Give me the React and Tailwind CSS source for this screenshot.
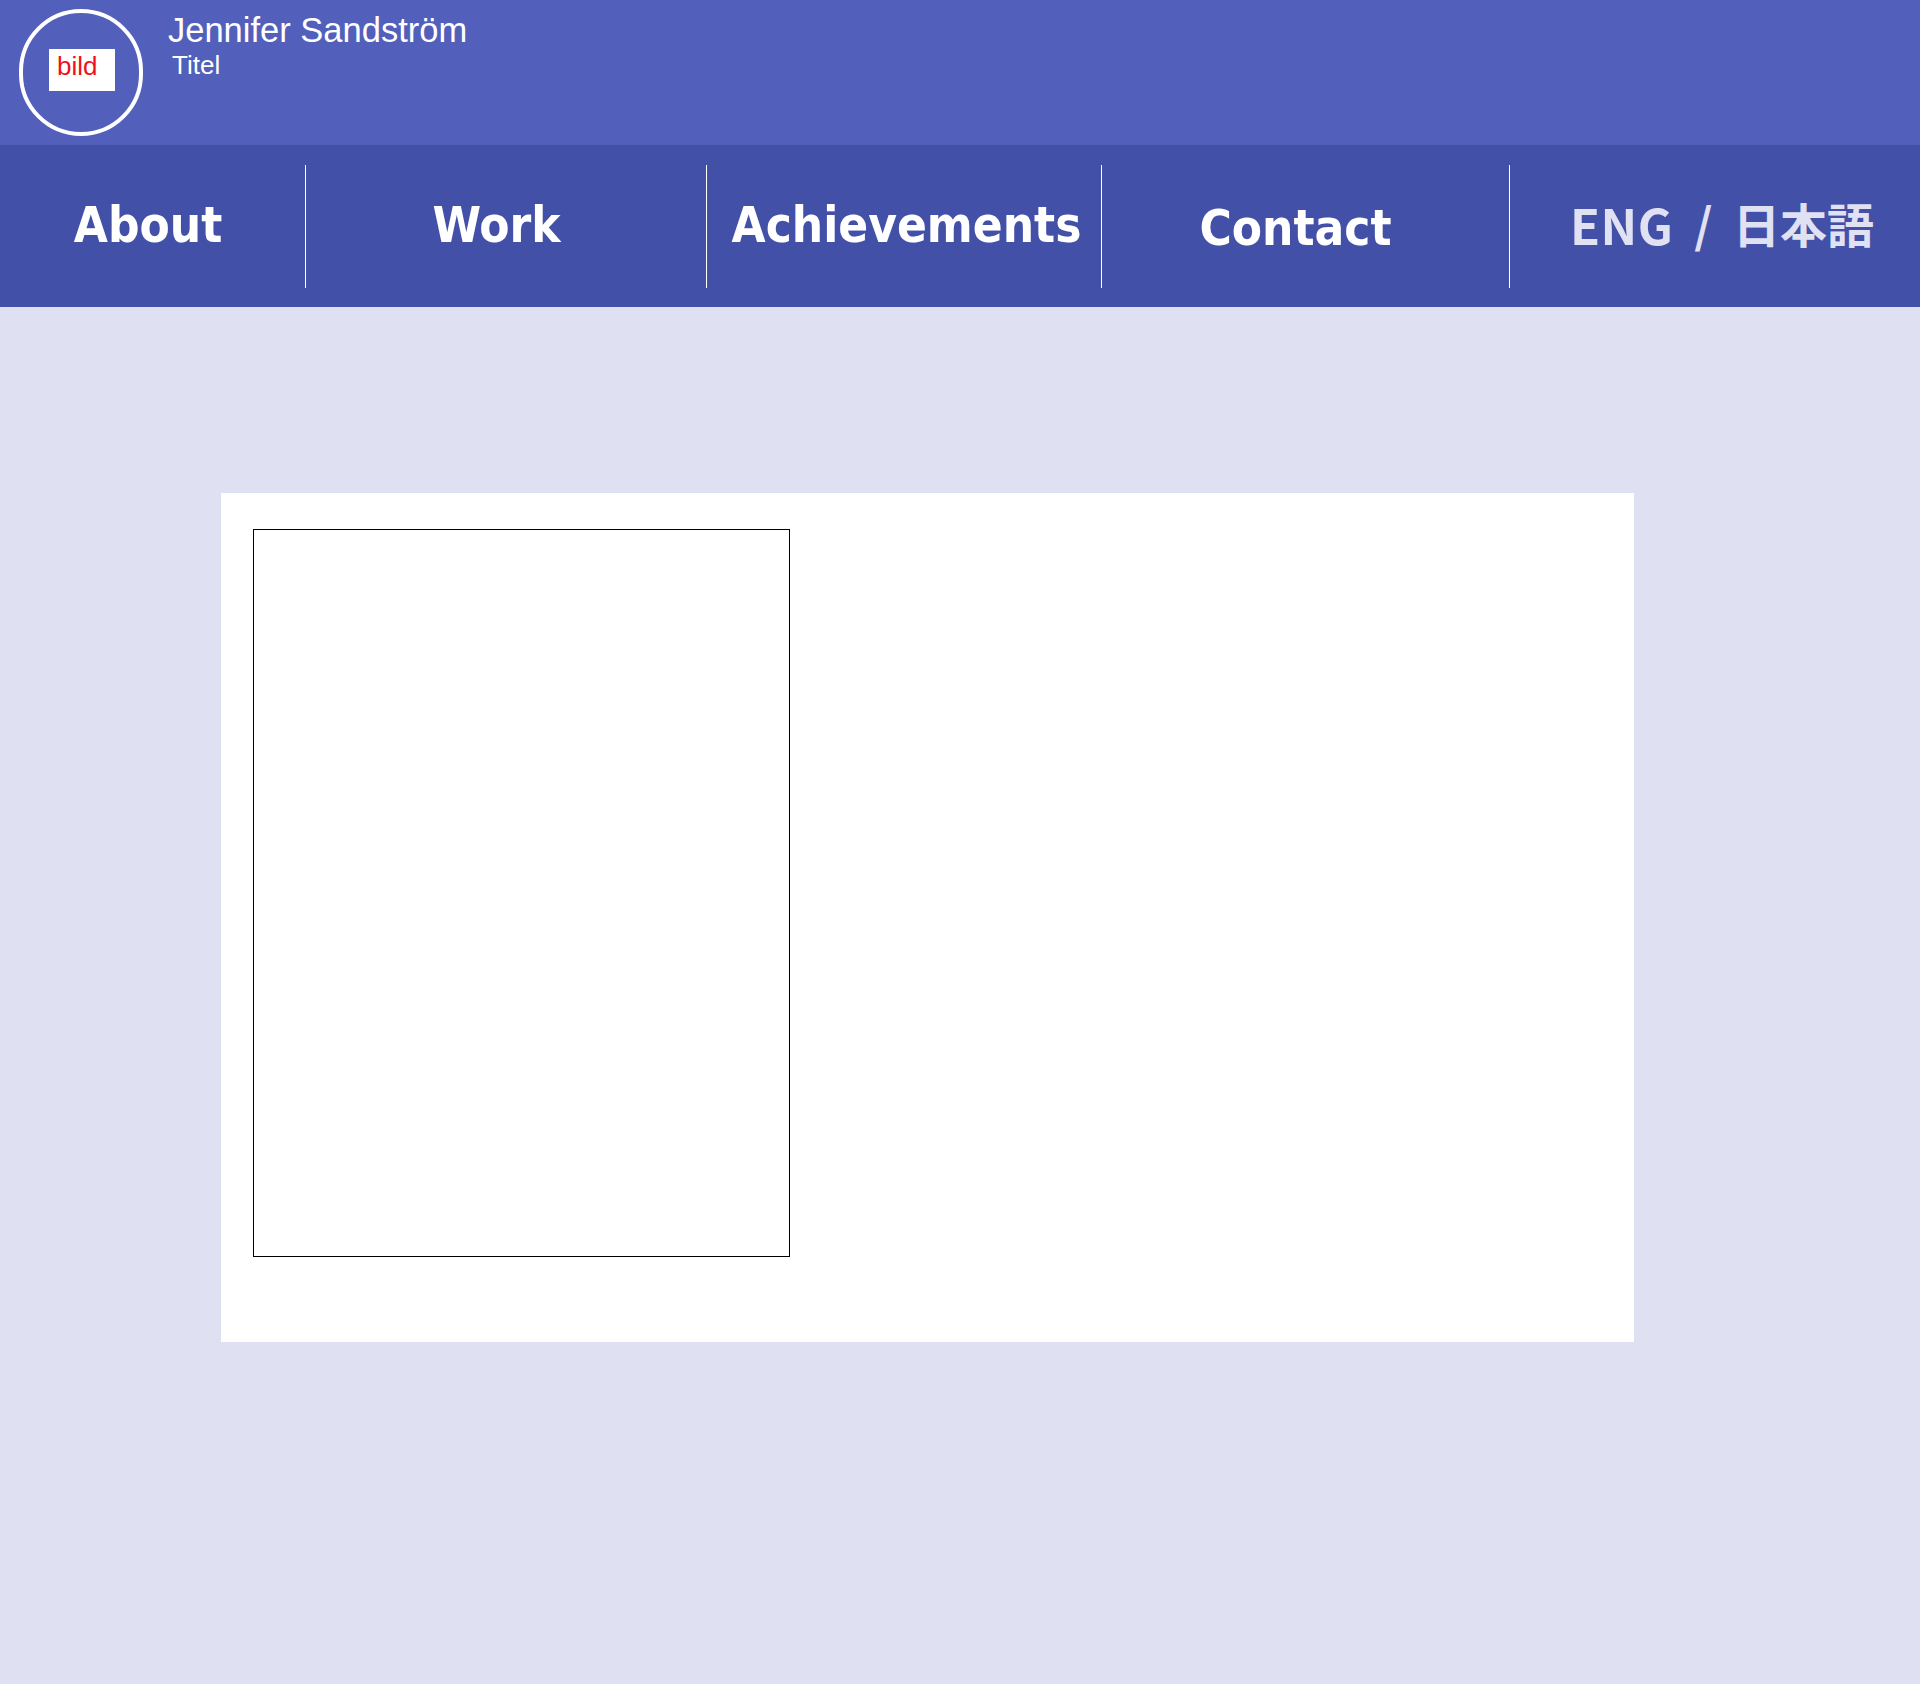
import React from "react";

const navFont = { fontFamily: '"DejaVu Sans Condensed", "DejaVu Sans", sans-serif' };

export default function App() {
  return (
    <div className="min-h-[1684px] w-full bg-[#dfe0f2]">
      <header className="h-[145px] bg-[#5260bb] flex items-start">
        <div className="ml-[19px] mt-[9px] w-[124px] h-[127px] rounded-full border-4 border-white flex items-center justify-center">
          <div className="w-[66px] h-[42px] bg-white ml-[2px] mb-[6px] pl-[8px] text-[26px] leading-[34px] text-[#f01020] font-['Liberation_Sans',Arial,sans-serif]">
            bild
          </div>
        </div>
        <div className="ml-[25px] flex flex-col font-['Liberation_Sans',Arial,sans-serif] text-white">
          <div className="mt-[10px] text-[34.5px] leading-[40px]">Jennifer Sandström</div>
          <div className="ml-[4px] mt-[-3px] text-[26px] leading-[36px]">Titel</div>
        </div>
      </header>

      <nav className="h-[162px] bg-[#4350a8] flex items-center">
        <div
          style={navFont}
          className="w-[305px] h-[123px] flex items-center justify-center pr-[9px] text-[49px] font-bold text-white [font-stretch:condensed]"
        >
          About
        </div>
        <div
          style={navFont}
          className="w-[401px] h-[123px] border-l border-white flex items-center justify-center pr-[19px] text-[49px] font-bold text-white [font-stretch:condensed]"
        >
          Work
        </div>
        <div
          style={navFont}
          className="w-[395px] h-[123px] border-l border-white flex items-center justify-center pl-[5px] text-[49px] font-bold text-white [font-stretch:condensed]"
        >
          Achievements
        </div>
        <div
          style={navFont}
          className="w-[408px] h-[123px] border-l border-white flex items-center justify-center pr-[20px] pt-[6px] text-[49px] font-bold text-white [font-stretch:condensed]"
        >
          Contact
        </div>
        <div className="flex-1 h-[123px] border-l border-white flex items-center justify-center pl-[14px] pb-[5px] text-[47px] font-bold text-[#e0e1f3] font-['Noto_Sans_CJK_JP','Noto_Sans',sans-serif] [word-spacing:10px]">
          <span className="text-[49px] tracking-[0.5px]">ENG</span>&nbsp;<span>/</span>&nbsp;<span>日本語</span>
        </div>
      </nav>

      <main className="pt-[186px] pl-[221px]">
        <div className="w-[1413px] h-[849px] bg-white pl-[32px] pt-[36px]">
          <div className="w-[537px] h-[728px] border border-black"></div>
        </div>
      </main>
    </div>
  );
}
